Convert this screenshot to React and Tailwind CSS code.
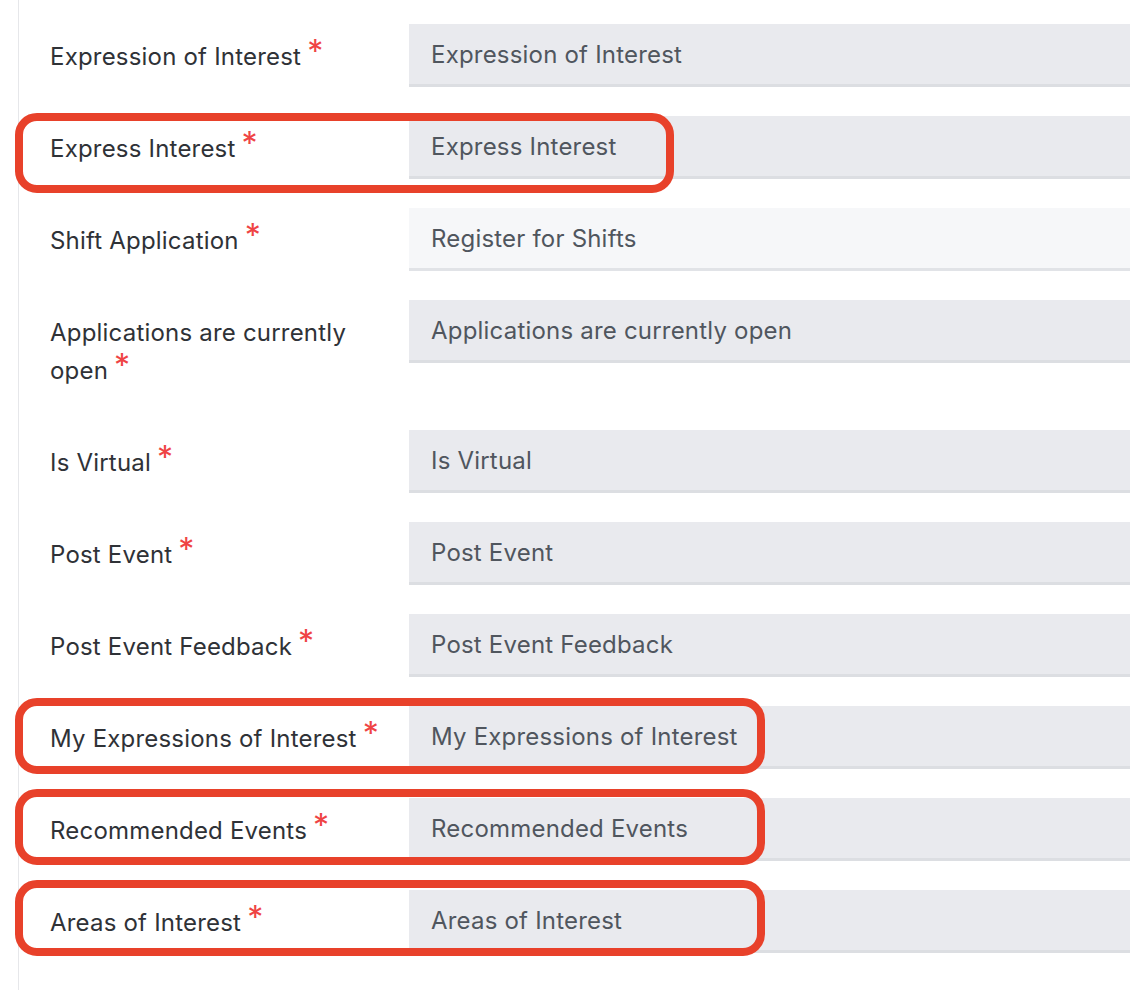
import React from "react";

const fields = [
  { label: "Expression of Interest", value: "Expression of Interest" },
  { label: "Express Interest", value: "Express Interest" },
  { label: "Shift Application", value: "Register for Shifts", light: true },
  { label: "Applications are currently open", value: "Applications are currently open" },
  { label: "Is Virtual", value: "Is Virtual" },
  { label: "Post Event", value: "Post Event" },
  { label: "Post Event Feedback", value: "Post Event Feedback" },
  { label: "My Expressions of Interest", value: "My Expressions of Interest" },
  { label: "Recommended Events", value: "Recommended Events" },
  { label: "Areas of Interest", value: "Areas of Interest" },
];

// hand-drawn highlight boxes over the screenshot
const marks = [
  "left-[15px] top-[113px] w-[659px] h-[80px]",
  "left-[15px] top-[698px] w-[750px] h-[76px]",
  "left-[15px] top-[789px] w-[750px] h-[76px]",
  "left-[15px] top-[880px] w-[750px] h-[76px]",
];

export default function App() {
  return (
    <div className="relative w-[1130px] min-h-[990px] overflow-hidden bg-white font-['Inter',sans-serif] tracking-[0.2px]">
      <div className="ml-[18px] min-h-[990px] border-l border-[#e6e7ea] pl-[31px] pt-[24px]">
        {fields.map((f) => (
          <div key={f.label} className="flex items-start mb-[29px]">
            <div className="w-[359px] shrink-0 pt-[14px] pb-[11px] pr-[8px] text-[24px] leading-[38px] text-[#2f3237]">
              {f.label}
              <span className="relative top-[-5px] inline-block h-[30px] align-top ml-[6px] text-[32px] leading-[38px] text-[#ef4444]">*</span>
            </div>
            <div
              className={
                f.light
                  ? "flex-1 h-[63px] flex items-center px-[22px] pt-[2px] bg-[#f6f7f9] border-b-[3px] border-[#e1e3e7] text-[24px] text-[#50565e]"
                  : "flex-1 h-[63px] flex items-center px-[22px] pt-[2px] bg-[#e9eaee] border-b-[3px] border-[#dcdee2] text-[24px] text-[#50565e]"
              }
            >
              {f.value}
            </div>
          </div>
        ))}
      </div>
      {marks.map((m) => (
        <div key={m} className={"absolute rounded-[22px] border-[8px] border-[#e8412a] " + m} />
      ))}
    </div>
  );
}
